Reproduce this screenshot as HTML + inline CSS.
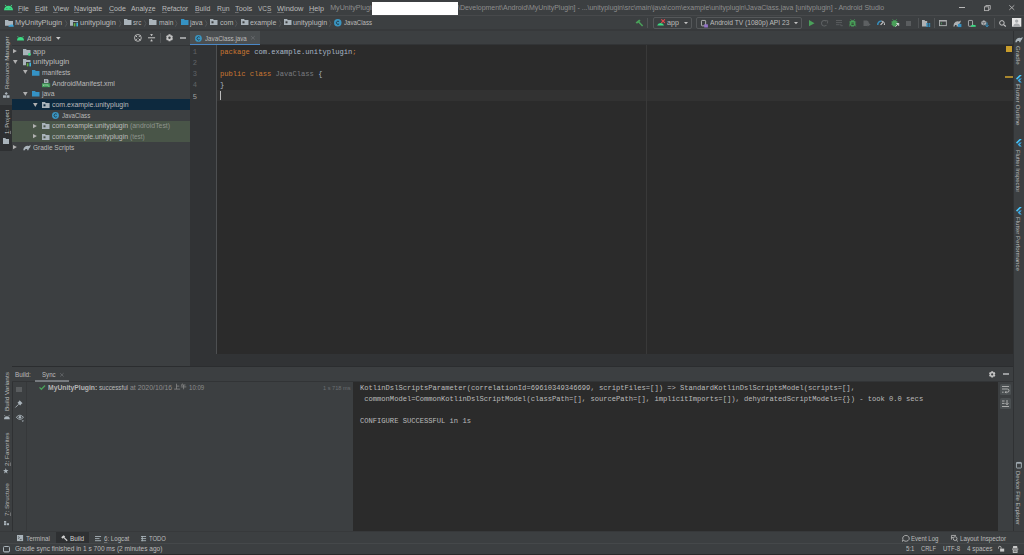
<!DOCTYPE html>
<html><head><meta charset="utf-8">
<style>
*{margin:0;padding:0;box-sizing:border-box}
html,body{width:1024px;height:555px;overflow:hidden;background:#3c3f41}
body{position:relative;font-family:"Liberation Sans",sans-serif;}
.a{position:absolute}
.t{position:absolute;white-space:nowrap;line-height:10px;font-family:"Liberation Sans",sans-serif}
.m{position:absolute;white-space:pre;line-height:10px;font-family:"Liberation Mono",monospace}
svg{overflow:visible}
u{text-decoration-color:#6e7072;text-underline-offset:1px}
</style></head><body>
<div class="a" style="left:0px;top:0px;width:1024px;height:15px;background:#3c3f41;"></div>
<div class="a" style="left:0px;top:15px;width:1024px;height:1px;background:#47494b;"></div>
<div class="a" style="left:0px;top:16px;width:1024px;height:14px;background:#3c3f41;"></div>
<div class="a" style="left:0px;top:29px;width:1024px;height:2px;background:#37393b;"></div>
<svg class="a" style="left:3.5px;top:4px;" width="9" height="6.5" viewBox="0 0 9 6.5"><path d="M0 6.3 A4.5 4.6 0 0 1 9 6.3 Z" fill="#3ddc84"/><path d="M2 2.2 L1.3 0.9 M7 2.2 L7.7 0.9" stroke="#3ddc84" stroke-width="1"/><circle cx="2.9" cy="4.4" r="0.45" fill="#3c3f41"/><circle cx="6.1" cy="4.4" r="0.45" fill="#3c3f41"/></svg>
<div class="t" style="left:18.45px;top:3.87px;font-size:7.3px;color:#bbbbbb;transform-origin:0 0;transform:scaleX(0.9222);"><u>F</u>ile</div>
<div class="t" style="left:35.1px;top:3.87px;font-size:7.3px;color:#bbbbbb;transform-origin:0 0;transform:scaleX(0.9898);"><u>E</u>dit</div>
<div class="t" style="left:53.45px;top:3.87px;font-size:7.3px;color:#bbbbbb;transform-origin:0 0;transform:scaleX(1.0104);"><u>V</u>iew</div>
<div class="t" style="left:74.45px;top:3.87px;font-size:7.3px;color:#bbbbbb;transform-origin:0 0;transform:scaleX(0.9747);"><u>N</u>avigate</div>
<div class="t" style="left:109.10000000000001px;top:3.87px;font-size:7.3px;color:#bbbbbb;transform-origin:0 0;transform:scaleX(0.9626);"><u>C</u>ode</div>
<div class="t" style="left:131.45px;top:3.87px;font-size:7.3px;color:#bbbbbb;transform-origin:0 0;transform:scaleX(0.9467);">Analy<u>z</u>e</div>
<div class="t" style="left:162.45px;top:3.87px;font-size:7.3px;color:#bbbbbb;transform-origin:0 0;transform:scaleX(0.9453);"><u>R</u>efactor</div>
<div class="t" style="left:195.2px;top:3.87px;font-size:7.3px;color:#bbbbbb;transform-origin:0 0;transform:scaleX(0.9363);"><u>B</u>uild</div>
<div class="t" style="left:216.79999999999998px;top:3.87px;font-size:7.3px;color:#bbbbbb;transform-origin:0 0;transform:scaleX(0.9335);">R<u>u</u>n</div>
<div class="t" style="left:235.45px;top:3.87px;font-size:7.3px;color:#bbbbbb;transform-origin:0 0;transform:scaleX(1.0090);"><u>T</u>ools</div>
<div class="t" style="left:258.2px;top:3.87px;font-size:7.3px;color:#bbbbbb;transform-origin:0 0;transform:scaleX(0.8909);">VC<u>S</u></div>
<div class="t" style="left:276.7px;top:3.87px;font-size:7.3px;color:#bbbbbb;transform-origin:0 0;transform:scaleX(1.0205);"><u>W</u>indow</div>
<div class="t" style="left:308.59999999999997px;top:3.87px;font-size:7.3px;color:#bbbbbb;transform-origin:0 0;transform:scaleX(0.9990);"><u>H</u>elp</div>
<div class="t" style="left:330.2px;top:3.24px;font-size:7.1px;color:#8e8e8e;">MyUnityPlugin [</div>
<div class="a" style="left:372px;top:2px;width:86px;height:13px;background:#ffffff;"></div>
<div class="t" style="left:458.3px;top:3.24px;font-size:7.1px;color:#8e8e8e;transform-origin:0 0;transform:scaleX(0.9836);">\Development\Android\MyUnityPlugin] - ...\unityplugin\src\main\java\com\example\unityplugin\JavaClass.java [unityplugin] - Android Studio</div>
<div class="a" style="left:959px;top:7px;width:6px;height:1px;background:#b8b8b8;"></div>
<svg class="a" style="left:983.5px;top:4.5px;" width="7" height="6" viewBox="0 0 7 6"><rect x="0.5" y="1.8" width="4.2" height="3.8" fill="none" stroke="#b0b0b0" stroke-width="0.9"/><path d="M1.8 1.8 V0.5 H6.3 V4.3 H4.7" fill="none" stroke="#b0b0b0" stroke-width="0.9"/></svg>
<svg class="a" style="left:1008.8px;top:5px;" width="5.6" height="5.2" viewBox="0 0 5.6 5.2"><path d="M0.3 0.3 L5.3 4.9 M5.3 0.3 L0.3 4.9" stroke="#b8b8b8" stroke-width="0.85"/></svg>
<svg class="a" style="left:5px;top:19.6px;" width="8" height="5.8" viewBox="0 0 8 5.8"><path d="M0 0 H3 L3.8 1 H8 V5.8 H0 Z" fill="#a9b3ba"/></svg>
<svg class="a" style="left:7.5px;top:23.5px;" width="6" height="3" viewBox="0 0 6 3"><path d="M0.5 2.8 Q0 1.2 1.8 1.2 Q2.6 0 4 0.6 Q5.8 0.6 5.8 2.8 Z" fill="#3fa6d9"/></svg>
<div class="t" style="left:15px;top:18.11px;font-size:7.2px;color:#bbbbbb;transform-origin:0 0;transform:scaleX(1.0253);">MyUnityPlugin</div>
<svg class="a" style="left:64.8px;top:19.7px;" width="2.4" height="7" viewBox="0 0 2.4 7"><path d="M0.3 0.3 L2 3.5 L0.3 6.7" fill="none" stroke="#5b5e60" stroke-width="0.7"/></svg>
<svg class="a" style="left:70px;top:19.6px;" width="8" height="5.8" viewBox="0 0 8 5.8"><path d="M0 0 H3 L3.8 1 H8 V5.8 H0 Z" fill="#a9b3ba"/></svg>
<svg class="a" style="left:72.8px;top:21.6px;" width="5.4" height="4.4" viewBox="0 0 5.4 4.4"><rect x="0" y="0" width="5.4" height="4.4" fill="#3c3f41"/><rect x="0.8" y="1.2" width="1.6" height="3.2" fill="#62b543"/><rect x="3.4" y="0.6" width="1.6" height="3.8" fill="#40b6e0"/></svg>
<div class="t" style="left:79.6px;top:18.11px;font-size:7.2px;color:#bbbbbb;transform-origin:0 0;transform:scaleX(1.0415);">unityplugin</div>
<svg class="a" style="left:118.75px;top:19.7px;" width="2.4" height="7" viewBox="0 0 2.4 7"><path d="M0.3 0.3 L2 3.5 L0.3 6.7" fill="none" stroke="#5b5e60" stroke-width="0.7"/></svg>
<svg class="a" style="left:123.5px;top:19.3px;" width="7.5" height="6" viewBox="0 0 7.5 6"><path d="M0 0 H3 L3.8 1 H7.5 V6 H0 Z" fill="#a9b3ba"/></svg>
<div class="t" style="left:133.1px;top:18.11px;font-size:7.2px;color:#bbbbbb;transform-origin:0 0;transform:scaleX(0.8666);">src</div>
<svg class="a" style="left:143.8px;top:19.7px;" width="2.4" height="7" viewBox="0 0 2.4 7"><path d="M0.3 0.3 L2 3.5 L0.3 6.7" fill="none" stroke="#5b5e60" stroke-width="0.7"/></svg>
<svg class="a" style="left:149px;top:19.3px;" width="7.5" height="6" viewBox="0 0 7.5 6"><path d="M0 0 H3 L3.8 1 H7.5 V6 H0 Z" fill="#a9b3ba"/></svg>
<div class="t" style="left:158.75px;top:18.11px;font-size:7.2px;color:#bbbbbb;transform-origin:0 0;transform:scaleX(0.9244);">main</div>
<svg class="a" style="left:175.4px;top:19.7px;" width="2.4" height="7" viewBox="0 0 2.4 7"><path d="M0.3 0.3 L2 3.5 L0.3 6.7" fill="none" stroke="#5b5e60" stroke-width="0.7"/></svg>
<svg class="a" style="left:180.9px;top:19.3px;" width="7.5" height="6" viewBox="0 0 7.5 6"><path d="M0 0 H3 L3.8 1 H7.5 V6 H0 Z" fill="#3592c4"/></svg>
<div class="t" style="left:190px;top:18.11px;font-size:7.2px;color:#bbbbbb;transform-origin:0 0;transform:scaleX(0.9479);">java</div>
<svg class="a" style="left:204.8px;top:19.7px;" width="2.4" height="7" viewBox="0 0 2.4 7"><path d="M0.3 0.3 L2 3.5 L0.3 6.7" fill="none" stroke="#5b5e60" stroke-width="0.7"/></svg>
<svg class="a" style="left:210px;top:19.3px;" width="7.5" height="6" viewBox="0 0 7.5 6"><path d="M0 0 H3 L3.8 1 H7.5 V6 H0 Z" fill="#a9b3ba"/><rect x="1.5" y="2.3" width="2" height="2" fill="#3c3f41"/></svg>
<div class="t" style="left:219.6px;top:18.11px;font-size:7.2px;color:#bbbbbb;transform-origin:0 0;transform:scaleX(0.9942);">com</div>
<svg class="a" style="left:235.4px;top:19.7px;" width="2.4" height="7" viewBox="0 0 2.4 7"><path d="M0.3 0.3 L2 3.5 L0.3 6.7" fill="none" stroke="#5b5e60" stroke-width="0.7"/></svg>
<svg class="a" style="left:240.6px;top:19.3px;" width="7.5" height="6" viewBox="0 0 7.5 6"><path d="M0 0 H3 L3.8 1 H7.5 V6 H0 Z" fill="#a9b3ba"/><rect x="1.5" y="2.3" width="2" height="2" fill="#3c3f41"/></svg>
<div class="t" style="left:250px;top:18.11px;font-size:7.2px;color:#bbbbbb;transform-origin:0 0;transform:scaleX(0.9661);">example</div>
<svg class="a" style="left:278.7px;top:19.7px;" width="2.4" height="7" viewBox="0 0 2.4 7"><path d="M0.3 0.3 L2 3.5 L0.3 6.7" fill="none" stroke="#5b5e60" stroke-width="0.7"/></svg>
<svg class="a" style="left:283.75px;top:19.3px;" width="7.5" height="6" viewBox="0 0 7.5 6"><path d="M0 0 H3 L3.8 1 H7.5 V6 H0 Z" fill="#a9b3ba"/><rect x="1.5" y="2.3" width="2" height="2" fill="#3c3f41"/></svg>
<div class="t" style="left:293.1px;top:18.11px;font-size:7.2px;color:#bbbbbb;transform-origin:0 0;transform:scaleX(0.9949);">unityplugin</div>
<svg class="a" style="left:329.3px;top:19.7px;" width="2.4" height="7" viewBox="0 0 2.4 7"><path d="M0.3 0.3 L2 3.5 L0.3 6.7" fill="none" stroke="#5b5e60" stroke-width="0.7"/></svg>
<svg class="a" style="left:334.4px;top:18.6px;" width="7.5" height="7.5" viewBox="0 0 7.5 7.5"><circle cx="3.75" cy="3.75" r="3.75" fill="#3a95c1"/><path d="M5.05 2.55 A1.6 1.6 0 1 0 5.05 4.95" fill="none" stroke="#1f3440" stroke-width="0.9"/></svg>
<div class="t" style="left:344.1px;top:18.11px;font-size:7.2px;color:#bbbbbb;transform-origin:0 0;transform:scaleX(0.8445);">JavaClass</div>
<svg class="a" style="left:634.5px;top:18.8px;" width="8" height="8" viewBox="0 0 8 8"><path d="M0.6 3.4 L4.2 0.4 L5.6 1.8 L2 4.8 Z" fill="#4aa05a"/><path d="M3.3 2.4 L7.6 7.1" stroke="#4aa05a" stroke-width="1.5"/></svg>
<div class="a" style="left:647px;top:18px;width:1px;height:10px;background:#505355;"></div>
<div class="a" style="left:653px;top:17px;width:39px;height:12px;background:transparent;border:1px solid #55585a;border-radius:2px"></div>
<svg class="a" style="left:657px;top:18.6px;" width="8.5" height="7" viewBox="0 0 8.5 7"><path d="M0.2 6.5 A3.5 3.3 0 0 1 7 6.5 Z" fill="#3ddc84"/><path d="M4.3 0.4 L7.9 3.8 M7.9 0.4 L4.3 3.8" stroke="#e5484d" stroke-width="1.1"/></svg>
<div class="t" style="left:667.2px;top:18.21px;font-size:7.2px;color:#bbbbbb;transform-origin:0 0;transform:scaleX(0.9917);">app</div>
<svg class="a" style="left:684px;top:22px;" width="4" height="2.2" viewBox="0 0 4 2.2"><path d="M0 0 H4 L2 2.2 Z" fill="#c0c0c0"/></svg>
<div class="a" style="left:696px;top:17px;width:106px;height:12px;background:transparent;border:1px solid #55585a;border-radius:2px"></div>
<svg class="a" style="left:700.8px;top:19.6px;" width="7" height="7.6" viewBox="0 0 7 7.6"><rect x="0.45" y="0.45" width="4.2" height="5.4" rx="0.7" fill="none" stroke="#bbbbbb" stroke-width="0.9"/><rect x="3.2" y="4.3" width="3.7" height="3.2" fill="#9272c6"/></svg>
<div class="t" style="left:709.8px;top:18.21px;font-size:7.2px;color:#bbbbbb;transform-origin:0 0;transform:scaleX(0.9251);">Android TV (1080p) API 23</div>
<svg class="a" style="left:793.9px;top:22px;" width="4" height="2.2" viewBox="0 0 4 2.2"><path d="M0 0 H4 L2 2.2 Z" fill="#c0c0c0"/></svg>
<svg class="a" style="left:808.75px;top:20px;" width="5.5" height="6.3" viewBox="0 0 5.5 6.3"><path d="M0 0 L5.5 3.15 L0 6.3 Z" fill="#4aa05a"/></svg>
<svg class="a" style="left:821.3px;top:20px;" width="7" height="6.6" viewBox="0 0 7 6.6"><path d="M5.2 1.2 A2.8 2.8 0 1 0 5.5 5" fill="none" stroke="#5d6062" stroke-width="1.1"/><path d="M3.5 0.5 L6.8 0.8 L6.3 3.5" fill="none" stroke="#5d6062" stroke-width="0.9"/></svg>
<svg class="a" style="left:836px;top:20.4px;" width="7" height="6.2" viewBox="0 0 7 6.2"><path d="M0 0.5 H6 M0 2.6 H6 M0 4.7 H3.6" stroke="#5d6062" stroke-width="0.9"/><path d="M4.8 4 V5.7 H6.8" fill="none" stroke="#5d6062" stroke-width="0.8"/></svg>
<svg class="a" style="left:849.2px;top:18.9px;" width="7.2" height="7.5" viewBox="0 0 7.2 7.5"><path d="M1.6 0.3 L2.6 1.6 M5.6 0.3 L4.6 1.6" stroke="#4aa05a" stroke-width="0.8"/><ellipse cx="3.6" cy="4.4" rx="2.7" ry="3.1" fill="#4aa05a"/><path d="M0 3 H7.2 M0 5.2 H7.2 M0 7.2 L1.3 6.3 M7.2 7.2 L5.9 6.3" stroke="#4aa05a" stroke-width="0.7"/><rect x="2.4" y="3.6" width="2.4" height="0.9" fill="#2f3a30"/><rect x="2.4" y="5.2" width="2.4" height="0.9" fill="#2f3a30"/></svg>
<svg class="a" style="left:862.9px;top:20px;" width="7.7" height="6.6" viewBox="0 0 7.7 6.6"><path d="M0.5 0.5 H4 A3 3 0 0 1 4 6.1 H0.5 Z" fill="#5d6062"/><path d="M4.6 2.3 L7.7 4.4 L4.6 6.5 Z" fill="#5d6062"/></svg>
<svg class="a" style="left:876.6px;top:20px;" width="8" height="5" viewBox="0 0 8 5"><path d="M0.8 5 A3.4 3.4 0 0 1 4.4 1.1" fill="none" stroke="#3592c4" stroke-width="1.4"/><path d="M4.4 1.1 A3.4 3.4 0 0 1 7.4 5" fill="none" stroke="#cfcfcf" stroke-width="1"/><path d="M3.6 4.8 L6 2.4" stroke="#cfcfcf" stroke-width="1.1"/></svg>
<svg class="a" style="left:890.8px;top:18.9px;" width="8.2" height="8" viewBox="0 0 8.2 8"><path d="M1.6 0.3 L2.6 1.6 M5.6 0.3 L4.6 1.6" stroke="#4aa05a" stroke-width="0.8"/><ellipse cx="3.6" cy="4.4" rx="2.7" ry="3.1" fill="#4aa05a"/><path d="M0 3 H7.2 M0 5.2 H7.2" stroke="#4aa05a" stroke-width="0.7"/><path d="M4.6 7.6 L7.6 4.6 M5.4 4.5 H7.7 V6.8" fill="none" stroke="#dcdcdc" stroke-width="1"/></svg>
<div class="a" style="left:906px;top:21px;width:5px;height:5px;background:#5a5d5f;"></div>
<div class="a" style="left:918px;top:18px;width:1px;height:10px;background:#505355;"></div>
<svg class="a" style="left:921.8px;top:20px;" width="8.4" height="7" viewBox="0 0 8.4 7"><path d="M0 0 H2.5 L3.2 0.9 H5.2 V6.5 H0 Z" fill="#afb1b3"/><rect x="4.2" y="3.1" width="1.7" height="1.7" fill="#3592c4"/><rect x="6.5" y="3.1" width="1.7" height="1.7" fill="#3592c4"/><rect x="4.2" y="5.2" width="1.7" height="1.7" fill="#3592c4"/><rect x="6.5" y="5.2" width="1.7" height="1.7" fill="#3592c4"/></svg>
<div class="a" style="left:934px;top:18px;width:1px;height:10px;background:#505355;"></div>
<svg class="a" style="left:939.4px;top:19.7px;" width="7.8" height="6.1" viewBox="0 0 7.8 6.1"><rect x="0.45" y="0.45" width="6.9" height="5.2" fill="none" stroke="#afb1b3" stroke-width="0.9"/><rect x="0.45" y="0.45" width="6.9" height="1.1" fill="#afb1b3"/><path d="M1.8 2.6 L3 3.5 L1.8 4.4" fill="none" stroke="#4aa05a" stroke-width="0.8"/></svg>
<svg class="a" style="left:953px;top:20px;" width="8.8" height="7.1" viewBox="0 0 8.8 7.1"><path d="M0.3 6.5 Q0.6 3 2.6 1.8 Q4.4 0.8 6 1.6 L8 0.5 L7.2 2.8 Q6.4 4 5.5 4.5 L5 6.5 H3.6 L3.6 5 H2 L1.6 6.5 Z" fill="#afb1b3"/><rect x="4.9" y="3.9" width="3.5" height="3.2" fill="#3592c4"/></svg>
<svg class="a" style="left:967.8px;top:20px;" width="7.7" height="6.6" viewBox="0 0 7.7 6.6"><rect x="0.45" y="0.45" width="4.1" height="5.8" rx="0.6" fill="none" stroke="#afb1b3" stroke-width="0.9"/><path d="M3.2 6.6 A2.3 2.3 0 0 1 7.7 6.6 Z" fill="#3ddc84"/><rect x="3.2" y="5.2" width="4.5" height="1.4" fill="#3ddc84"/></svg>
<svg class="a" style="left:981px;top:20px;" width="8" height="7" viewBox="0 0 8 7"><path d="M0.3 1.5 L2.8 0.2 L5.3 1.5 V4.3 L2.8 5.6 L0.3 4.3 Z" fill="#afb1b3"/><path d="M0.3 1.5 L2.8 2.8 L5.3 1.5 M2.8 2.8 V5.6" fill="none" stroke="#3c3f41" stroke-width="0.5"/><path d="M6 2.5 V6.6 M4.5 5.2 L6 6.8 L7.5 5.2" fill="none" stroke="#3592c4" stroke-width="1"/></svg>
<div class="a" style="left:994px;top:18px;width:1px;height:10px;background:#505355;"></div>
<svg class="a" style="left:999px;top:20px;" width="7" height="6.6" viewBox="0 0 7 6.6"><circle cx="2.9" cy="2.9" r="2.3" fill="none" stroke="#c8c8c8" stroke-width="1"/><path d="M4.6 4.6 L6.8 6.5" stroke="#c8c8c8" stroke-width="1.2"/></svg>
<svg class="a" style="left:1012.1px;top:18.4px;" width="9.3" height="8.7" viewBox="0 0 9.3 8.7"><rect width="9.3" height="8.7" fill="#e4e4e4"/><circle cx="4.65" cy="3.1" r="1.7" fill="#a7aaad"/><path d="M1.3 8.7 A3.35 3.1 0 0 1 8 8.7 Z" fill="#a7aaad"/></svg>
<div class="a" style="left:0px;top:31px;width:12px;height:500px;background:#3c3f41;"></div>
<div class="a" style="left:12px;top:31px;width:1px;height:500px;background:#2f3133;"></div>
<div class="t" style="left:7.36px;top:89.4px;font-size:5.9px;color:#bbbbbb;transform-origin:0 0;transform:rotate(-90deg) translate(0,-5px) scaleX(1.0504);">Resource Manager</div>
<svg class="a" style="left:2.5px;top:92.3px;" width="6.5" height="5.8" viewBox="0 0 6.5 5.8"><path d="M3.25 0 L4.8 1.5 L3.25 3 L1.7 1.5 Z" fill="#a9b3ba"/><rect x="0" y="3.3" width="3" height="2.5" fill="#a9b3ba"/><rect x="3.5" y="3.3" width="3" height="2.5" fill="#a9b3ba"/></svg>
<div class="a" style="left:0px;top:105px;width:12px;height:46px;background:#2e3032;"></div>
<div class="t" style="left:7.36px;top:134.3px;font-size:5.9px;color:#c8c8c8;transform-origin:0 0;transform:rotate(-90deg) translate(0,-5px) scaleX(0.9630);"><u>1</u>: Project</div>
<svg class="a" style="left:2.8px;top:138px;" width="6" height="6" viewBox="0 0 6 6"><path d="M0 0 H2.4 L3 0.9 H6 V6 H0 Z" fill="#a9b3ba"/></svg>
<div class="a" style="left:12px;top:31px;width:178px;height:336px;background:#3c3f41;"></div>
<div class="a" style="left:12px;top:45px;width:178px;height:1px;background:#323436;"></div>
<svg class="a" style="left:17px;top:35.6px;" width="7" height="4.6" viewBox="0 0 7 4.6"><path d="M0 4.6 A3.5 3.6 0 0 1 7 4.6 Z" fill="#3ddc84"/><path d="M1.3 1.5 L0.6 0.1 M5.7 1.5 L6.4 0.1" stroke="#3ddc84" stroke-width="0.7"/></svg>
<div class="t" style="left:26.7px;top:33.81px;font-size:7.2px;color:#bbbbbb;transform-origin:0 0;transform:scaleX(0.9846);">Android</div>
<svg class="a" style="left:55.8px;top:37px;" width="4.6" height="2.8" viewBox="0 0 4.6 2.8"><path d="M0 0 H4.6 L2.3 2.8 Z" fill="#c8c8c8"/></svg>
<svg class="a" style="left:133.8px;top:34.4px;" width="7.8" height="7.8" viewBox="0 0 7.8 7.8"><circle cx="3.9" cy="3.9" r="3.4" fill="none" stroke="#c4c4c4" stroke-width="0.9"/><path d="M1.6 1.6 L3.1 3.1 M6.2 1.6 L4.7 3.1 M1.6 6.2 L3.1 4.7 M6.2 6.2 L4.7 4.7" stroke="#c4c4c4" stroke-width="1"/></svg>
<svg class="a" style="left:147.9px;top:34px;" width="7.1" height="7.3" viewBox="0 0 7.1 7.3"><path d="M0 3.8 H7.1" stroke="#c4c4c4" stroke-width="1"/><path d="M2 0.3 L3.55 2 L5.1 0.3 Z M2 7.3 L3.55 5.6 L5.1 7.3 Z" fill="#c4c4c4"/><path d="M3.55 0 V2 M3.55 5.6 V7.3" stroke="#c4c4c4" stroke-width="0.8"/></svg>
<div class="a" style="left:160px;top:33px;width:1px;height:10px;background:#505355;"></div>
<svg class="a" style="left:165.7px;top:34px;" width="7" height="7.6" viewBox="0 0 7 7.6"><path d="M2.27 1.40 L2.51 0.34 L4.49 0.34 L4.73 1.40 L4.97 1.53 L6.00 1.21 L6.99 2.93 L6.20 3.67 L6.20 3.93 L6.99 4.67 L6.00 6.39 L4.97 6.07 L4.73 6.20 L4.49 7.26 L2.51 7.26 L2.27 6.20 L2.03 6.07 L1.00 6.39 L0.01 4.67 L0.80 3.93 L0.80 3.67 L0.01 2.93 L1.00 1.21 L2.03 1.53 Z" fill="#c4c4c4"/><circle cx="3.5" cy="3.8" r="1.2" fill="#3c3f41"/></svg>
<div class="a" style="left:180px;top:37px;width:6px;height:2px;background:#9a9c9e;"></div>
<div class="a" style="left:12px;top:99px;width:178px;height:11px;background:#0d293e;"></div>
<div class="a" style="left:12px;top:121px;width:178px;height:21px;background:#495548;"></div>
<svg class="a" style="left:13.1px;top:49.4px;" width="3.9" height="4.2" viewBox="0 0 3.9 4.2"><path d="M0 0 L3.9 2.1 L0 4.2 Z" fill="#b0b0b0"/></svg>
<svg class="a" style="left:22.9px;top:48.800000000000004px;" width="7.5" height="6.3" viewBox="0 0 7.5 6.3"><path d="M0 0 H3 L3.8 1 H7.5 V6.3 H0 Z" fill="#a9b3ba"/></svg>
<svg class="a" style="left:27.8px;top:52.800000000000004px;" width="2.8" height="2.8" viewBox="0 0 2.8 2.8"><circle cx="1.4" cy="1.4" r="1.4" fill="#3ddc84"/></svg>
<div class="t" style="left:32.6px;top:46.51px;font-size:7.2px;color:#bbbbbb;transform-origin:0 0;transform:scaleX(1.0167);">app</div>
<svg class="a" style="left:13.3px;top:59.769999999999996px;" width="4.6" height="4" viewBox="0 0 4.6 4"><path d="M0 0 H4.6 L2.3 4 Z" fill="#b0b0b0"/></svg>
<svg class="a" style="left:22.9px;top:59.47px;" width="7.5" height="6.3" viewBox="0 0 7.5 6.3"><path d="M0 0 H3 L3.8 1 H7.5 V6.3 H0 Z" fill="#a9b3ba"/></svg>
<svg class="a" style="left:25.6px;top:61.669999999999995px;" width="5.4" height="4.4" viewBox="0 0 5.4 4.4"><rect x="0" y="0" width="5.4" height="4.4" fill="#3c3f41"/><rect x="0.8" y="1.2" width="1.6" height="3.2" fill="#62b543"/><rect x="3.4" y="0.6" width="1.6" height="3.8" fill="#40b6e0"/></svg>
<div class="t" style="left:32.9px;top:57.18px;font-size:7.2px;color:#bbbbbb;transform-origin:0 0;transform:scaleX(1.0560);">unityplugin</div>
<svg class="a" style="left:22.9px;top:70.44px;" width="4.6" height="4" viewBox="0 0 4.6 4"><path d="M0 0 H4.6 L2.3 4 Z" fill="#b0b0b0"/></svg>
<svg class="a" style="left:32.3px;top:69.74px;" width="7.5" height="5.8" viewBox="0 0 7.5 5.8"><path d="M0 0 H3 L3.8 1 H7.5 V5.8 H0 Z" fill="#3592c4"/></svg>
<div class="t" style="left:42px;top:67.85px;font-size:7.2px;color:#bbbbbb;transform-origin:0 0;transform:scaleX(0.9231);">manifests</div>
<svg class="a" style="left:41.9px;top:79.31px;" width="8.2" height="8.2" viewBox="0 0 8.2 8.2"><path d="M2 0 H5.5 L6.5 1 V4 H2 Z" fill="#a9b3ba"/><path d="M3 1.3 H5 M3 2.5 H5" stroke="#3c3f41" stroke-width="0.5"/><rect x="0" y="4.3" width="8.2" height="3.9" fill="#3b9a55"/><path d="M1 5.3 L2 7.2 M2 5.3 L1 7.2 M3 7.2 V5.3 L4 6.3 L5 5.3 V7.2 M6 5.3 V7.2 H7.5" stroke="#c8e6c9" stroke-width="0.45" fill="none"/></svg>
<div class="t" style="left:51.7px;top:78.52px;font-size:7.2px;color:#bbbbbb;transform-origin:0 0;transform:scaleX(0.9658);">AndroidManifest.xml</div>
<svg class="a" style="left:23.3px;top:91.78px;" width="4.6" height="4" viewBox="0 0 4.6 4"><path d="M0 0 H4.6 L2.3 4 Z" fill="#b0b0b0"/></svg>
<svg class="a" style="left:32.25px;top:91.28px;" width="7.5" height="5.5" viewBox="0 0 7.5 5.5"><path d="M0 0 H3 L3.8 1 H7.5 V5.5 H0 Z" fill="#3592c4"/></svg>
<div class="t" style="left:41.5px;top:89.19px;font-size:7.2px;color:#bbbbbb;transform-origin:0 0;transform:scaleX(0.9555);">java</div>
<svg class="a" style="left:32.9px;top:102.55px;" width="4.6" height="4" viewBox="0 0 4.6 4"><path d="M0 0 H4.6 L2.3 4 Z" fill="#b0b0b0"/></svg>
<svg class="a" style="left:41.9px;top:102.05px;" width="7.6" height="6" viewBox="0 0 7.6 6"><path d="M0 0 H3 L3.8 1 H7.6 V6 H0 Z" fill="#a9b3ba"/><rect x="1.5" y="2.3" width="2" height="2" fill="#0d293e"/></svg>
<div class="t" style="left:51.7px;top:99.86px;font-size:7.2px;color:#bbbbbb;transform-origin:0 0;transform:scaleX(0.9681);">com.example.unityplugin</div>
<svg class="a" style="left:51.7px;top:112.32000000000001px;" width="6.9" height="6.9" viewBox="0 0 6.9 6.9"><circle cx="3.45" cy="3.45" r="3.45" fill="#3a95c1"/><path d="M4.75 2.25 A1.6 1.6 0 1 0 4.75 4.65" fill="none" stroke="#1f3440" stroke-width="0.9"/></svg>
<div class="t" style="left:61.5px;top:110.53px;font-size:7.2px;color:#bbbbbb;transform-origin:0 0;transform:scaleX(0.8505);">JavaClass</div>
<svg class="a" style="left:32.5px;top:123.78999999999999px;" width="3.9" height="4.2" viewBox="0 0 3.9 4.2"><path d="M0 0 L3.9 2.1 L0 4.2 Z" fill="#b0b0b0"/></svg>
<svg class="a" style="left:42px;top:123.38999999999999px;" width="7.5" height="6" viewBox="0 0 7.5 6"><path d="M0 0 H3 L3.8 1 H7.5 V6 H0 Z" fill="#a9b3ba"/><rect x="1.5" y="2.3" width="2" height="2" fill="#495548"/></svg>
<div class="t" style="left:51.9px;top:121.20px;font-size:7.2px;color:#bbbbbb;transform-origin:0 0;transform:scaleX(0.9618);">com.example.unityplugin</div>
<div class="t" style="left:129.7px;top:121.20px;font-size:7.2px;color:#8e948d;transform-origin:0 0;transform:scaleX(0.9534);">(androidTest)</div>
<svg class="a" style="left:32.5px;top:134.46px;" width="3.9" height="4.2" viewBox="0 0 3.9 4.2"><path d="M0 0 L3.9 2.1 L0 4.2 Z" fill="#b0b0b0"/></svg>
<svg class="a" style="left:42px;top:134.06px;" width="7.5" height="6" viewBox="0 0 7.5 6"><path d="M0 0 H3 L3.8 1 H7.5 V6 H0 Z" fill="#a9b3ba"/><rect x="1.5" y="2.3" width="2" height="2" fill="#495548"/></svg>
<div class="t" style="left:51.9px;top:131.87px;font-size:7.2px;color:#bbbbbb;transform-origin:0 0;transform:scaleX(0.9618);">com.example.unityplugin</div>
<div class="t" style="left:129.7px;top:131.87px;font-size:7.2px;color:#8e948d;transform-origin:0 0;transform:scaleX(0.8916);">(test)</div>
<svg class="a" style="left:13.4px;top:145.13px;" width="3.9" height="4.2" viewBox="0 0 3.9 4.2"><path d="M0 0 L3.9 2.1 L0 4.2 Z" fill="#b0b0b0"/></svg>
<svg class="a" style="left:22.6px;top:144.82999999999998px;" width="8.6" height="5.3" viewBox="0 0 8.6 5.3"><path d="M0.2 5.3 Q0.4 2.6 2.2 1.4 Q4 0.3 5.8 1.1 L7.8 0 L7.2 2.1 Q6.6 3.3 5.8 3.8 L5.4 5.3 H4.2 L4.2 4.1 H2.4 L2 5.3 Z" fill="#a9b3ba"/></svg>
<div class="t" style="left:32.6px;top:142.54px;font-size:7.2px;color:#bbbbbb;transform-origin:0 0;transform:scaleX(0.9068);">Gradle Scripts</div>
<div class="a" style="left:190px;top:31px;width:823px;height:13px;background:#3c3f41;"></div>
<div class="a" style="left:190px;top:31px;width:70px;height:13px;background:#4b4f51;"></div>
<div class="a" style="left:190px;top:44px;width:70px;height:1px;background:#4a88c7;"></div>
<div class="a" style="left:260px;top:44px;width:754px;height:1px;background:#323436;"></div>
<svg class="a" style="left:195.1px;top:34.7px;" width="6.8" height="6.8" viewBox="0 0 6.8 6.8"><circle cx="3.4" cy="3.4" r="3.4" fill="#3a95c1"/><path d="M4.70 2.20 A1.6 1.6 0 1 0 4.70 4.60" fill="none" stroke="#1f3440" stroke-width="0.9"/></svg>
<div class="t" style="left:205.2px;top:33.87px;font-size:7px;color:#bbbbbb;transform-origin:0 0;transform:scaleX(0.8879);">JavaClass.java</div>
<svg class="a" style="left:251.3px;top:36.2px;" width="3.9" height="3.6" viewBox="0 0 3.9 3.6"><path d="M0.2 0.2 L3.7 3.4 M3.7 0.2 L0.2 3.4" stroke="#6f7274" stroke-width="0.7"/></svg>
<div class="a" style="left:190px;top:45px;width:824px;height:309px;background:#2b2b2b;"></div>
<div class="a" style="left:190px;top:45px;width:26px;height:309px;background:#313335;"></div>
<div class="a" style="left:216px;top:45px;width:1px;height:309px;background:#4d4f51;"></div>
<div class="a" style="left:217px;top:90px;width:797px;height:11px;background:#323232;"></div>
<div class="a" style="left:646px;top:45px;width:1px;height:309px;background:#393939;"></div>
<div class="m" style="left:192.8px;top:46.81px;font-size:7.11px;color:#606366;">1</div>
<div class="m" style="left:192.8px;top:58.01px;font-size:7.11px;color:#606366;">2</div>
<div class="m" style="left:192.8px;top:69.21px;font-size:7.11px;color:#606366;">3</div>
<div class="m" style="left:192.8px;top:80.41px;font-size:7.11px;color:#606366;">4</div>
<div class="m" style="left:192.8px;top:91.61px;font-size:7.11px;color:#a4a3a3;">5</div>
<div class="m" style="left:220px;top:46.71px;font-size:7.11px;color:#a9b7c6;"><span style="color:#cc7832">package</span> com.example.unityplugin<span style="color:#cc7832">;</span></div>
<div class="m" style="left:220px;top:69.11px;font-size:7.11px;color:#a9b7c6;"><span style="color:#cc7832">public class</span> <span style="color:#7a7c80">JavaClass</span> {</div>
<div class="m" style="left:220px;top:80.31px;font-size:7.11px;color:#a9b7c6;">}</div>
<div class="a" style="left:220px;top:91px;width:1px;height:9px;background:#bbbbbb;"></div>
<div class="a" style="left:1006px;top:46px;width:6px;height:6px;background:#c99d2b;"></div>
<div class="a" style="left:1005px;top:76px;width:8px;height:2px;background:#a8862e;"></div>
<div class="a" style="left:190px;top:354px;width:824px;height:13px;background:#313335;"></div>
<div class="a" style="left:1013px;top:31px;width:11px;height:500px;background:#3c3f41;"></div>
<div class="a" style="left:1013px;top:31px;width:1px;height:500px;background:#2f3133;"></div>
<svg class="a" style="left:1015px;top:36.8px;" width="8.2" height="5.3" viewBox="0 0 8.2 5.3"><path d="M0.2 5.3 Q0.4 2.6 2.2 1.4 Q4 0.3 5.8 1.1 L7.8 0 L7.2 2.1 Q6.6 3.3 5.8 3.8 L5.4 5.3 H4.2 L4.2 4.1 H2.4 L2 5.3 Z" fill="#a9b3ba"/></svg>
<div class="t" style="left:1017.61px;top:46.4px;font-size:5.8px;color:#bbbbbb;transform-origin:0 0;transform:rotate(90deg) translate(0,-5px) scaleX(1.0695);">Gradle</div>
<svg class="a" style="left:1016px;top:74.6px;" width="6" height="7.5" viewBox="0 0 6 7.5"><path d="M3.6 0 L0 3.6 L1.1 4.7 L5.8 0 Z" fill="#47c5fb"/><path d="M3.6 3.5 L1.7 5.4 L3.6 7.5 H5.8 L3.9 5.4 L5.8 3.5 Z" fill="#3ba6e0"/></svg>
<div class="t" style="left:1017.61px;top:84px;font-size:5.8px;color:#bbbbbb;transform-origin:0 0;transform:rotate(90deg) translate(0,-5px) scaleX(1.1409);">Flutter Outline</div>
<svg class="a" style="left:1016px;top:138.8px;" width="6" height="7.5" viewBox="0 0 6 7.5"><path d="M3.6 0 L0 3.6 L1.1 4.7 L5.8 0 Z" fill="#47c5fb"/><path d="M3.6 3.5 L1.7 5.4 L3.6 7.5 H5.8 L3.9 5.4 L5.8 3.5 Z" fill="#3ba6e0"/></svg>
<div class="t" style="left:1017.61px;top:149.5px;font-size:5.8px;color:#bbbbbb;transform-origin:0 0;transform:rotate(90deg) translate(0,-5px) scaleX(1.0078);">Flutter Inspector</div>
<svg class="a" style="left:1016px;top:206.8px;" width="6" height="7.5" viewBox="0 0 6 7.5"><path d="M3.6 0 L0 3.6 L1.1 4.7 L5.8 0 Z" fill="#47c5fb"/><path d="M3.6 3.5 L1.7 5.4 L3.6 7.5 H5.8 L3.9 5.4 L5.8 3.5 Z" fill="#3ba6e0"/></svg>
<div class="t" style="left:1017.61px;top:217.4px;font-size:5.8px;color:#bbbbbb;transform-origin:0 0;transform:rotate(90deg) translate(0,-5px) scaleX(1.0527);">Flutter Performance</div>
<svg class="a" style="left:1015.8px;top:462px;" width="5.8" height="6.5" viewBox="0 0 5.8 6.5"><rect x="0.45" y="0.45" width="4.9" height="5.6" rx="0.6" fill="none" stroke="#a9b3ba" stroke-width="0.9"/><rect x="0.45" y="0.45" width="4.9" height="1.2" fill="#a9b3ba"/></svg>
<div class="t" style="left:1017.61px;top:471px;font-size:5.8px;color:#bbbbbb;transform-origin:0 0;transform:rotate(90deg) translate(0,-5px) scaleX(1.0416);">Device File Explorer</div>
<div class="a" style="left:12px;top:366px;width:1001px;height:1px;background:#2b2d2f;"></div>
<div class="a" style="left:12px;top:367px;width:1001px;height:14px;background:#3c3f41;"></div>
<div class="a" style="left:12px;top:381px;width:1001px;height:1px;background:#323436;"></div>
<div class="t" style="left:15px;top:369.74px;font-size:6.8px;color:#bbbbbb;transform-origin:0 0;transform:scaleX(0.9344);">Build:</div>
<div class="t" style="left:41.7px;top:369.74px;font-size:6.8px;color:#bbbbbb;transform-origin:0 0;transform:scaleX(0.8992);">Sync</div>
<svg class="a" style="left:59.5px;top:372.9px;" width="3.8" height="3.7" viewBox="0 0 3.8 3.7"><path d="M0.2 0.2 L3.6 3.5 M3.6 0.2 L0.2 3.5" stroke="#6f7274" stroke-width="0.7"/></svg>
<div class="a" style="left:35px;top:380px;width:34px;height:2px;background:#767a7e;"></div>
<svg class="a" style="left:988.8px;top:370.6px;" width="6.4" height="6.8" viewBox="0 0 6.4 6.8"><path d="M2.08 1.22 L2.29 0.23 L4.11 0.23 L4.32 1.22 L4.53 1.34 L5.49 1.02 L6.40 2.60 L5.65 3.28 L5.65 3.52 L6.40 4.20 L5.49 5.78 L4.53 5.46 L4.32 5.58 L4.11 6.57 L2.29 6.57 L2.08 5.58 L1.87 5.46 L0.91 5.78 L-0.00 4.20 L0.75 3.52 L0.75 3.28 L-0.00 2.60 L0.91 1.02 L1.87 1.34 Z" fill="#c4c4c4"/><circle cx="3.2" cy="3.4" r="1.1" fill="#3c3f41"/></svg>
<div class="a" style="left:1003px;top:373px;width:6px;height:2px;background:#9a9c9e;"></div>
<div class="a" style="left:26px;top:382px;width:1px;height:149px;background:#36383a;"></div>
<div class="a" style="left:16px;top:387px;width:6px;height:5px;background:#5a5d5f;"></div>
<svg class="a" style="left:15.1px;top:399.6px;" width="7.9" height="7.9" viewBox="0 0 7.9 7.9"><path d="M4.6 0.3 L7.6 3.3 L6.6 3.8 L5.2 5.4 L2.5 2.7 L4.1 1.3 Z" fill="#a9b3ba"/><path d="M3.6 4.3 L0.4 7.5" stroke="#a9b3ba" stroke-width="0.9"/></svg>
<svg class="a" style="left:15.85px;top:414px;" width="8" height="7.9" viewBox="0 0 8 7.9"><path d="M0.3 3.3 Q3.9 -0.9 7.5 3.3 Q3.9 7.5 0.3 3.3 Z" fill="none" stroke="#a9b3ba" stroke-width="0.9"/><circle cx="3.9" cy="3.3" r="1.3" fill="#a9b3ba"/><path d="M5.6 6.4 H8 L6.8 7.9 Z" fill="#a9b3ba"/></svg>
<svg class="a" style="left:38.9px;top:385.1px;" width="6.6" height="4.9" viewBox="0 0 6.6 4.9"><path d="M0.5 2.4 L2.4 4.3 L6.1 0.5" fill="none" stroke="#4aa05a" stroke-width="1.3"/></svg>
<div class="t" style="left:48.1px;top:382.84px;font-size:6.8px;color:#b4b4b4;font-weight:bold;transform-origin:0 0;transform:scaleX(0.9943);">MyUnityPlugin:</div>
<div class="t" style="left:98.9px;top:382.84px;font-size:6.8px;color:#bbbbbb;transform-origin:0 0;transform:scaleX(0.9125);">successful</div>
<div class="t" style="left:130px;top:382.84px;font-size:6.8px;color:#8c8c8c;transform-origin:0 0;transform:scaleX(1.0146);">at 2020/10/16</div>
<svg class="a" style="left:173px;top:383.2px;" width="14" height="7" viewBox="0 0 14 7"><g stroke="#8c8c8c" stroke-width="0.75" fill="none"><path d="M3.5 0.7 V6.1 M3.5 3.1 H6.3 M1.1 6.1 H7.1"/><path d="M9.4 0.6 L8.3 2.8 M8.9 2 H12.5 M7.8 3.9 H13.3 M10.6 2 V6.3"/></g></svg>
<div class="t" style="left:189.4px;top:382.84px;font-size:6.8px;color:#8c8c8c;transform-origin:0 0;transform:scaleX(0.8933);">10:09</div>
<div class="t" style="left:322.8px;top:383.02px;font-size:6px;color:#6c6f72;transform-origin:0 0;transform:scaleX(0.9357);">1 s 718 ms</div>
<div class="a" style="left:353px;top:382px;width:645px;height:149px;background:#2b2b2b;"></div>
<div class="a" style="left:998px;top:382px;width:15px;height:149px;background:#3c3f41;"></div>
<div class="a" style="left:1000px;top:384px;width:11px;height:11px;background:#4b5052;border-radius:1.5px"></div>
<div class="a" style="left:1000px;top:398px;width:11px;height:11px;background:#4b5052;border-radius:1.5px"></div>
<svg class="a" style="left:1002px;top:386.2px;" width="7" height="6.8" viewBox="0 0 7 6.8"><path d="M0 0.5 H7 M0 3 H5.4 A1.6 1.6 0 0 1 5.4 6.2 H3.2 M4.2 5.2 L3.2 6.2 L4.2 7.2 M0 6.2 H1.6" fill="none" stroke="#c4c4c4" stroke-width="0.8"/></svg>
<svg class="a" style="left:1002px;top:400.2px;" width="7" height="7" viewBox="0 0 7 7"><path d="M0 1 H2.6 M0 3.4 H2.6 M0 6.5 H7 M5 0 V4.6 M3.5 3.2 L5 4.7 L6.5 3.2" fill="none" stroke="#c4c4c4" stroke-width="0.8"/></svg>
<div class="m" style="left:360px;top:383.11px;font-size:7.11px;color:#bbbbbb;">KotlinDslScriptsParameter(correlationId=69610349346699, scriptFiles=[]) =&gt; StandardKotlinDslScriptsModel(scripts=[],</div>
<div class="m" style="left:360px;top:394.21px;font-size:7.11px;color:#bbbbbb;"> commonModel=CommonKotlinDslScriptModel(classPath=[], sourcePath=[], implicitImports=[]), dehydratedScriptModels={}) - took 0.0 secs</div>
<div class="m" style="left:360px;top:416.41px;font-size:7.11px;color:#bbbbbb;">CONFIGURE SUCCESSFUL in 1s</div>
<div class="t" style="left:7.36px;top:411.1px;font-size:5.9px;color:#bbbbbb;transform-origin:0 0;transform:rotate(-90deg) translate(0,-5px) scaleX(1.0820);">Build Variants</div>
<svg class="a" style="left:3.6px;top:413.8px;" width="5.8" height="5.2" viewBox="0 0 5.8 5.2"><path d="M0 5.2 A2.9 3 0 0 1 5.8 5.2 Z" fill="#a9b3ba"/><path d="M1 2.2 L0.4 1 M4.8 2.2 L5.4 1" stroke="#a9b3ba" stroke-width="0.6"/></svg>
<div class="t" style="left:6.86px;top:466px;font-size:5.9px;color:#bbbbbb;transform-origin:0 0;transform:rotate(-90deg) translate(0,-5px) scaleX(1.0834);"><u>2</u>: Favorites</div>
<svg class="a" style="left:3.3px;top:467.8px;" width="5.6" height="5.4" viewBox="0 0 5.6 5.4"><path d="M2.8 0 L3.5 1.9 L5.6 2 L4 3.3 L4.5 5.4 L2.8 4.2 L1.1 5.4 L1.6 3.3 L0 2 L2.1 1.9 Z" fill="#a9b3ba"/></svg>
<div class="t" style="left:6.96px;top:516.3px;font-size:5.9px;color:#bbbbbb;transform-origin:0 0;transform:rotate(-90deg) translate(0,-5px) scaleX(1.0787);"><u>7</u>: Structure</div>
<svg class="a" style="left:3.5px;top:521.3px;" width="5" height="4.2" viewBox="0 0 5 4.2"><rect x="0" y="0" width="2.2" height="1.8" fill="#a9b3ba"/><rect x="2.8" y="2.2" width="2.2" height="2" fill="#a9b3ba"/><rect x="0" y="2.2" width="2.2" height="2" fill="#a9b3ba"/></svg>
<div class="a" style="left:0px;top:531px;width:1024px;height:1px;background:#37393b;"></div>
<div class="a" style="left:0px;top:532px;width:1024px;height:11px;background:#3c3f41;"></div>
<div class="a" style="left:0px;top:543px;width:1024px;height:1px;background:#45484a;"></div>
<div class="a" style="left:0px;top:544px;width:1024px;height:10px;background:#3c3f41;"></div>
<div class="a" style="left:0px;top:554px;width:1024px;height:1px;background:#2a2a2a;"></div>
<svg class="a" style="left:17.3px;top:534.9px;" width="6.1" height="6.1" viewBox="0 0 6.1 6.1"><rect x="0" y="0" width="6.1" height="6.1" fill="#a9b3ba"/><path d="M1.2 1.6 L2.4 2.6 L1.2 3.6 M2.8 4.6 H4.6" fill="none" stroke="#3c3f41" stroke-width="0.7"/></svg>
<div class="t" style="left:26.2px;top:534.04px;font-size:6.8px;color:#bbbbbb;transform-origin:0 0;transform:scaleX(0.9298);">Terminal</div>
<div class="a" style="left:56px;top:532px;width:33px;height:11px;background:#2e3032;"></div>
<svg class="a" style="left:60.9px;top:534.9px;" width="6.6" height="6.1" viewBox="0 0 6.6 6.1"><path d="M0.2 2.3 L2.6 0.2 L4.2 1.6 L1.8 3.7 Z" fill="#d0d0d0"/><path d="M2.8 2.4 L6.2 5.8" stroke="#d0d0d0" stroke-width="1.2"/></svg>
<div class="t" style="left:69.8px;top:534.04px;font-size:6.8px;color:#d0d0d0;transform-origin:0 0;transform:scaleX(0.9322);">Build</div>
<svg class="a" style="left:95px;top:535.8px;" width="6.1" height="5.2" viewBox="0 0 6.1 5.2"><path d="M0 0.5 H6.1 M0 2.6 H4.5 M0 4.7 H6.1" stroke="#a9b3ba" stroke-width="0.9"/></svg>
<div class="t" style="left:103.9px;top:534.04px;font-size:6.8px;color:#bbbbbb;transform-origin:0 0;transform:scaleX(0.9041);"><u>6</u>: Logcat</div>
<svg class="a" style="left:141px;top:535.8px;" width="5.1" height="5.2" viewBox="0 0 5.1 5.2"><path d="M0 0.5 H5.1 M0 2.6 H5.1 M0 4.7 H5.1 M1.3 0 V5.2" stroke="#a9b3ba" stroke-width="0.9"/></svg>
<div class="t" style="left:148.9px;top:534.04px;font-size:6.8px;color:#bbbbbb;transform-origin:0 0;transform:scaleX(0.8667);">TODO</div>
<svg class="a" style="left:901.6px;top:534.8px;" width="7.5" height="6.8" viewBox="0 0 7.5 6.8"><path d="M3.9 0.45 A3.3 2.9 0 1 1 1.6 5.4 L0.5 6.4 L0.9 4.4 A3.3 2.9 0 0 1 3.9 0.45 Z" fill="none" stroke="#bbbbbb" stroke-width="0.85"/></svg>
<div class="t" style="left:911px;top:533.64px;font-size:6.8px;color:#bbbbbb;transform-origin:0 0;transform:scaleX(0.8980);">Event Log</div>
<svg class="a" style="left:951px;top:534.8px;" width="7" height="6.5" viewBox="0 0 7 6.5"><path d="M0.45 4.6 V0.45 H5 M0.45 2.5 H2" fill="none" stroke="#bbbbbb" stroke-width="0.8"/><circle cx="4.1" cy="3.6" r="1.9" fill="none" stroke="#bbbbbb" stroke-width="0.85"/><path d="M5.4 5 L6.8 6.4" stroke="#bbbbbb" stroke-width="1"/></svg>
<div class="t" style="left:960.4px;top:533.64px;font-size:6.8px;color:#bbbbbb;transform-origin:0 0;transform:scaleX(0.9185);">Layout Inspector</div>
<svg class="a" style="left:2.8px;top:545.7px;" width="7" height="6.5" viewBox="0 0 7 6.5"><rect x="0.5" y="0.5" width="6" height="5.5" rx="1" fill="none" stroke="#a9b3ba" stroke-width="1"/><path d="M1 5.5 H6" stroke="#a9b3ba" stroke-width="0.6"/></svg>
<div class="t" style="left:14.5px;top:544.34px;font-size:6.8px;color:#bbbbbb;transform-origin:0 0;transform:scaleX(0.9633);">Gradle sync finished in 1 s 700 ms (2 minutes ago)</div>
<div class="t" style="left:905.75px;top:544.44px;font-size:6.8px;color:#bbbbbb;transform-origin:0 0;transform:scaleX(0.8886);">5:1</div>
<div class="t" style="left:921px;top:544.44px;font-size:6.8px;color:#bbbbbb;transform-origin:0 0;transform:scaleX(0.8451);">CRLF</div>
<div class="t" style="left:942.9px;top:544.44px;font-size:6.8px;color:#bbbbbb;transform-origin:0 0;transform:scaleX(0.8876);">UTF-8</div>
<div class="t" style="left:966.9px;top:544.44px;font-size:6.8px;color:#bbbbbb;transform-origin:0 0;transform:scaleX(0.9326);">4 spaces</div>
<svg class="a" style="left:997.9px;top:546px;" width="6.2" height="5.6" viewBox="0 0 6.2 5.6"><path d="M0.5 2.6 V1.6 A1.3 1.3 0 0 1 3.1 1.6 V2.6" fill="none" stroke="#c8c8c8" stroke-width="0.8"/><rect x="2.1" y="2.6" width="4.1" height="3" fill="#c8c8c8"/></svg>
<svg class="a" style="left:1011.6px;top:546px;" width="6.3" height="6.9" viewBox="0 0 6.3 6.9"><path d="M1.2 0 H5.1 L5.5 2.2 H0.8 Z" fill="#c8c8c8"/><rect x="0" y="2.6" width="6.3" height="1" fill="#c8c8c8"/><rect x="0.8" y="4" width="4.7" height="2.9" fill="#c8c8c8"/><rect x="1.6" y="4.6" width="3.1" height="1" fill="#3c3f41"/></svg>
</body></html>
